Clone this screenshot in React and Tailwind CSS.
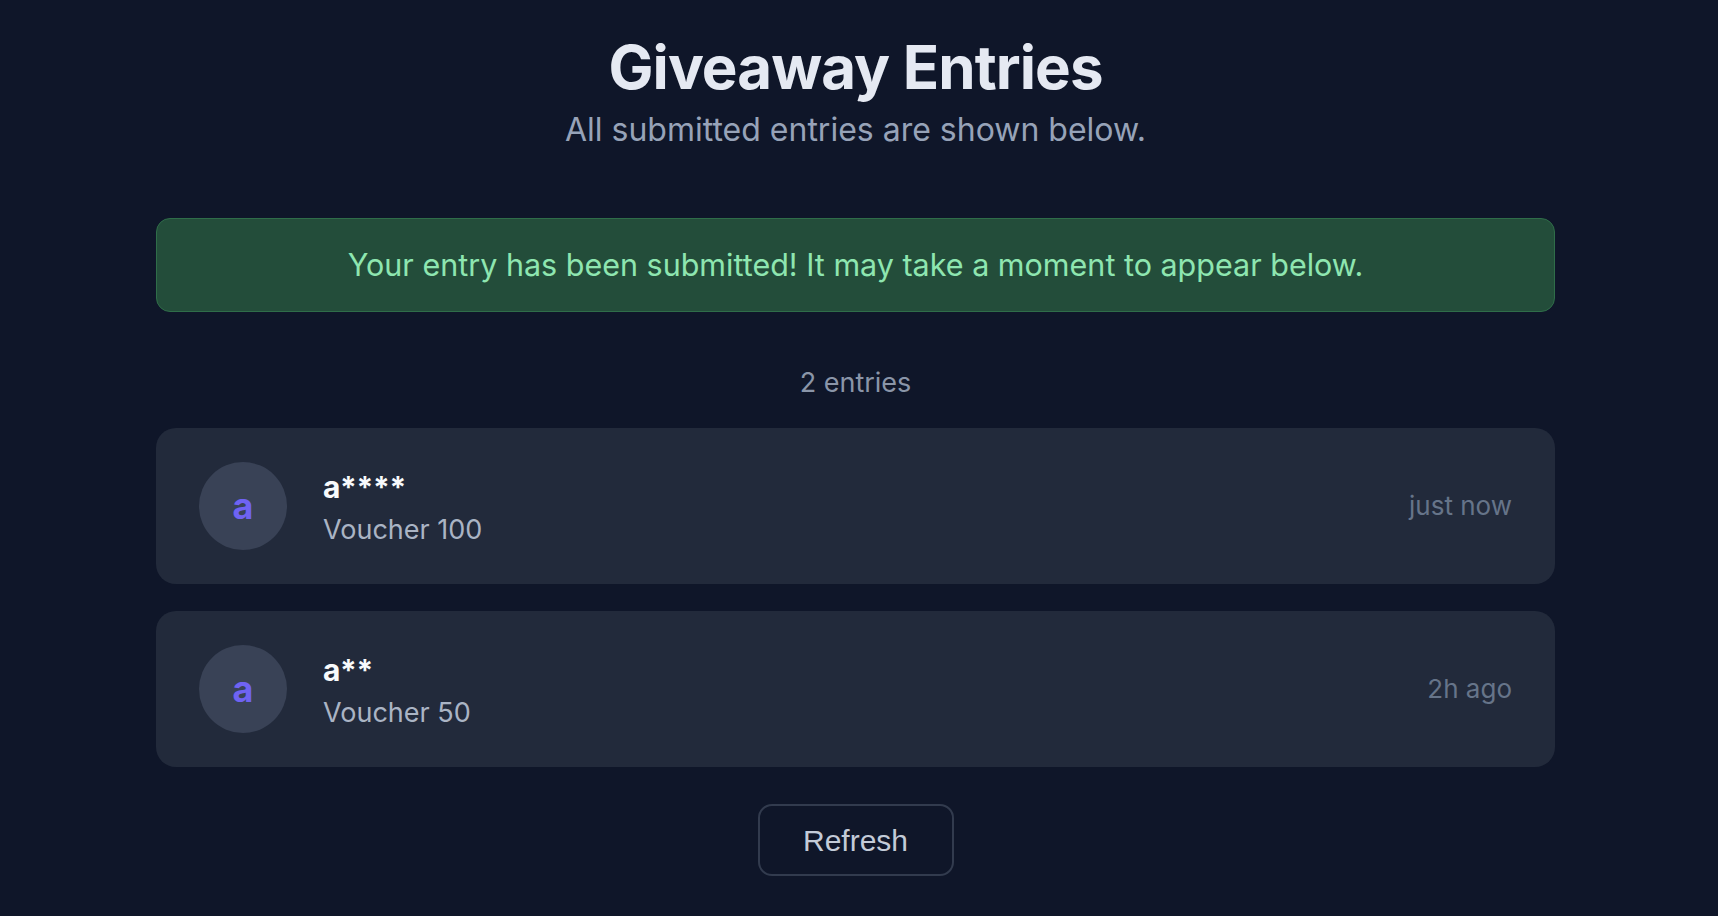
const entries = [
  { name: "a****", prize: "Voucher 100", time: "just now" },
  { name: "a**", prize: "Voucher 50", time: "2h ago" },
];

function EntryCard({ entry }) {
  return (
    <div className="flex h-[156px] items-center rounded-[20px] bg-[#222a3b] px-[43px]">
      <div className="flex h-[88px] w-[88px] shrink-0 items-center justify-center rounded-full bg-[#394256]">
        <span className="text-[36px] font-bold leading-none text-[#6f63f2]">a</span>
      </div>
      <div className="ml-[36px] flex min-w-0 flex-1 flex-col pt-[4px]">
        <span className="text-[30px] font-bold leading-[38px] tracking-[-0.01em] text-[#f8fafc]">{entry.name}</span>
        <span className="mt-[5px] text-[27px] leading-[38px] text-[#aab4c4]">{entry.prize}</span>
      </div>
      <span className="shrink-0 text-[26px] leading-none text-[#667489]">{entry.time}</span>
    </div>
  );
}

export default function App() {
  return (
    <div
      className="min-h-screen w-full bg-[#0f1629] pr-[7px]"
      style={{ fontFamily: "Inter, 'Noto Sans', sans-serif" }}
    >
      <div className="mx-auto flex w-[1399px] flex-col pt-[36px]">
        <h1 className="text-center text-[60px] font-bold leading-[62px] tracking-[-0.015em] text-[#e5e9f2]">
          Giveaway Entries
        </h1>
        <p className="mt-[16px] text-center text-[32px] leading-none text-[#97a3b8]">
          All submitted entries are shown below.
        </p>

        <div className="mt-[72px] flex h-[94px] items-center justify-center rounded-[14px] border border-[#2f6d49] bg-[#234d3a]">
          <span className="text-[30.5px] leading-none text-[#8ee6b0]">
            Your entry has been submitted! It may take a moment to appear below.
          </span>
        </div>

        <p className="mt-[57px] text-center text-[27px] leading-none text-[#8a95a8]">
          {entries.length} entries
        </p>

        <div className="mt-[32px] flex flex-col gap-[27px]">
          {entries.map((e) => (
            <EntryCard key={e.name} entry={e} />
          ))}
        </div>

        <div className="mt-[37px] flex justify-center pb-[41px]">
          <button
            type="button"
            className="flex h-[72px] w-[196px] items-center justify-center rounded-[14px] border-2 border-[#323b4e] text-[30px] text-[#c3cbd8]"
            style={{ fontFamily: "'Liberation Sans', Arial, sans-serif" }}
          >
            Refresh
          </button>
        </div>
      </div>
    </div>
  );
}
